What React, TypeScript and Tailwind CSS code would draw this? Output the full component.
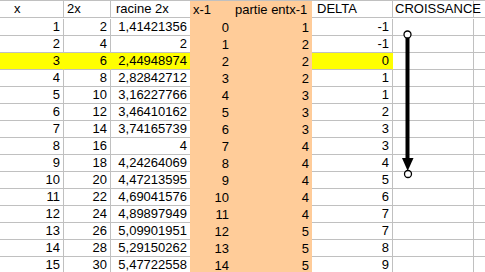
import React from 'react';

type Row = {
    x: string;
    x2: string;
    racine: string;
    xm1: string;
    partie: string;
    delta: string;
    highlight?: boolean;
};

const rows: Row[] = [
    { x: '1', x2: '2', racine: '1,41421356', xm1: '0', partie: '1', delta: '-1' },
    { x: '2', x2: '4', racine: '2', xm1: '1', partie: '2', delta: '-1' },
    { x: '3', x2: '6', racine: '2,44948974', xm1: '2', partie: '2', delta: '0', highlight: true },
    { x: '4', x2: '8', racine: '2,82842712', xm1: '3', partie: '2', delta: '1' },
    { x: '5', x2: '10', racine: '3,16227766', xm1: '4', partie: '3', delta: '1' },
    { x: '6', x2: '12', racine: '3,46410162', xm1: '5', partie: '3', delta: '2' },
    { x: '7', x2: '14', racine: '3,74165739', xm1: '6', partie: '3', delta: '3' },
    { x: '8', x2: '16', racine: '4', xm1: '7', partie: '4', delta: '3' },
    { x: '9', x2: '18', racine: '4,24264069', xm1: '8', partie: '4', delta: '4' },
    { x: '10', x2: '20', racine: '4,47213595', xm1: '9', partie: '4', delta: '5' },
    { x: '11', x2: '22', racine: '4,69041576', xm1: '10', partie: '4', delta: '6' },
    { x: '12', x2: '24', racine: '4,89897949', xm1: '11', partie: '4', delta: '7' },
    { x: '13', x2: '26', racine: '5,09901951', xm1: '12', partie: '5', delta: '7' },
    { x: '14', x2: '28', racine: '5,29150262', xm1: '13', partie: '5', delta: '8' },
    { x: '15', x2: '30', racine: '5,47722558', xm1: '14', partie: '5', delta: '9' },
];

// plain white cell with the grey gridlines
const cell = 'h-[17px] shrink-0 border-b border-r border-[#c0c0c0] leading-[16px] px-[3px]';
// filled cells hide their gridlines
const orange = 'h-[17px] shrink-0 bg-[#ffcc99] leading-[17px] px-[3px]';

function fill(highlight?: boolean) {
    return highlight ? 'bg-[#ffff00] border-r-[#ffff00]' : 'bg-white';
}

function Arrow() {
    return (
        <svg className="absolute left-0 top-0 pointer-events-none" width={485} height={272}>
            <line x1={407.5} y1={37} x2={407.5} y2={160} stroke="black" strokeWidth={4} />
            <polygon points="402,158 413.5,158 407.7,171" fill="black" />
            <circle cx={407.5} cy={34.5} r={3.5} fill="white" stroke="black" strokeWidth={1.3} />
            <circle cx={408} cy={174} r={3.5} fill="white" stroke="black" strokeWidth={1.3} />
        </svg>
    );
}

export default function App() {
    return (
        <div
            className="relative w-[485px] h-[272px] overflow-hidden bg-white text-[13px] text-black"
            style={{ fontFamily: '"Liberation Sans", Arial, sans-serif' }}
        >
            <div className="flex flex-col border-t border-[#c0c0c0]">
                {/* Header row */}
                <div className="flex">
                    <div className={`${cell} w-[64px] pl-[14px]`}>x</div>
                    <div className={`${cell} w-[47px]`}>2x</div>
                    <div className={`${cell} w-[79px] border-r-0 pl-[5px]`}>racine 2x</div>
                    <div className={`${orange} w-[42px] h-[18px] leading-[16px]`}>x-1</div>
                    <div className={`${orange} w-[80px] h-[18px] leading-[16px]`}>partie entx-1</div>
                    <div className={`${cell} w-[81px] pl-[5px]`}>DELTA</div>
                    <div className={`${cell} w-[81px] pl-[2px]`}>CROISSANCE</div>
                    <div className={`${cell} flex-1 border-r-0`} />
                </div>

                {/* Data rows */}
                {rows.map((r) => (
                    <div key={r.x} className="flex">
                        <div className={`${cell} ${fill(r.highlight)} w-[64px] text-right`}>{r.x}</div>
                        <div className={`${cell} ${fill(r.highlight)} w-[47px] text-right`}>{r.x2}</div>
                        <div className={`${cell} ${fill(r.highlight)} w-[79px] border-r-0 text-right`}>{r.racine}</div>
                        <div className={`${orange} w-[42px] text-right`}>{r.xm1}</div>
                        <div className={`${orange} w-[80px] text-right`}>{r.partie}</div>
                        <div className={`${cell} ${fill(r.highlight)} w-[81px] text-right`}>{r.delta}</div>
                        <div className={`${cell} w-[81px]`} />
                        <div className={`${cell} flex-1 border-r-0`} />
                    </div>
                ))}
            </div>

            <Arrow />
        </div>
    );
}
